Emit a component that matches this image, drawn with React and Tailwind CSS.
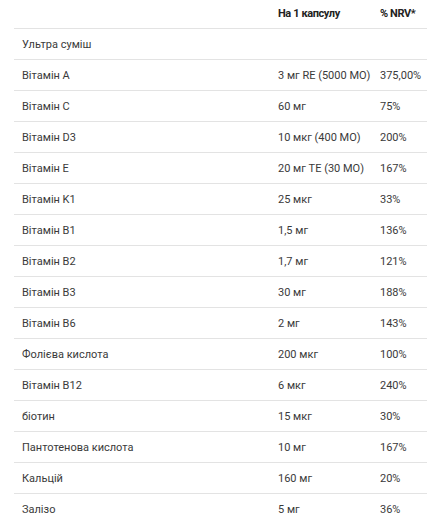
import React from "react";

const rows = [
  ["Ультра суміш", "", ""],
  ["Вітамін A", "3 мг RE (5000 МО)", "375,00%"],
  ["Вітамін C", "60 мг", "75%"],
  ["Вітамін D3", "10 мкг (400 МО)", "200%"],
  ["Вітамін E", "20 мг TE (30 МО)", "167%"],
  ["Вітамін K1", "25 мкг", "33%"],
  ["Вітамін B1", "1,5 мг", "136%"],
  ["Вітамін B2", "1,7 мг", "121%"],
  ["Вітамін B3", "30 мг", "188%"],
  ["Вітамін B6", "2 мг", "143%"],
  ["Фолієва кислота", "200 мкг", "100%"],
  ["Вітамін B12", "6 мкг", "240%"],
  ["біотин", "15 мкг", "30%"],
  ["Пантотенова кислота", "10 мг", "167%"],
  ["Кальцій", "160 мг", "20%"],
  ["Залізо", "5 мг", "36%"],
];

export default function App() {
  return (
    <div
      className="bg-white h-[514px] overflow-hidden pl-[14px] text-[11px] text-[#3a3a3a]"
      style={{ fontFamily: "Roboto, 'Liberation Sans', sans-serif" }}
    >
      <div className="w-[413px]">
        {/* Header */}
        <div className="grid grid-cols-[256px_102px_55px] h-[29px] items-center border-b border-[#e3e3e3] font-bold text-[#222] tracking-[-0.4px]">
          <div />
          <div className="pl-2">На 1 капсулу</div>
          <div className="pl-2">% NRV*</div>
        </div>

        {rows.map(([name, amount, nrv]) => (
          <div
            key={name}
            className="grid grid-cols-[256px_102px_55px] h-[31px] items-center pt-[2px] border-b border-[#e3e3e3]"
          >
            <div className="pl-2">{name}</div>
            <div className="pl-2 whitespace-nowrap">{amount}</div>
            <div className="pl-2">{nrv}</div>
          </div>
        ))}
      </div>
    </div>
  );
}
